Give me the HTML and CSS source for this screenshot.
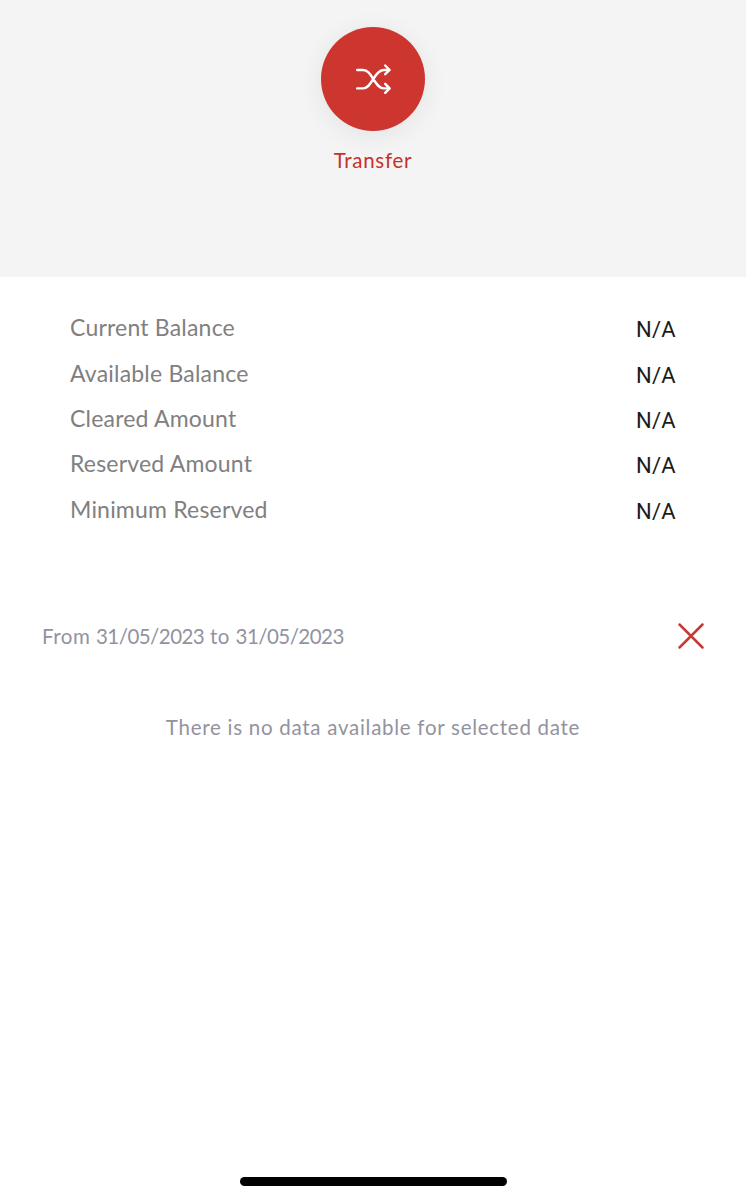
FILE: index.html
```
<!doctype html>
<html lang="en">
  <head>
    <meta charset="utf-8">
    <meta name="viewport" content="width=device-width, initial-scale=1">
    <title>Account</title>
    <link rel="stylesheet" href="styles.css">
  </head>
<body>
<div class="actions">
  <button class="transfer">
    <span class="transfer_circle">
      <svg width="36" height="32" viewBox="0 0 36 32">
        <path d="M2.2 7H8C13 7 15.5 11.5 18.3 16S24 25.4 29 25.4H34M2.2 25.4H8C13 25.4 15.5 20.5 18.3 16S24 7 29 7H34"/>
        <path d="M30.2 2.5L34.6 7L30.2 11.2M30.2 20.8L34.6 25.4L30.2 29.8"/>
      </svg>
    </span>
    <span class="transfer_label">Transfer</span>
  </button>
</div>

<dl class="balances">
  <div class="row"><dt>Current Balance</dt><dd>N/A</dd></div>
  <div class="row"><dt>Available Balance</dt><dd>N/A</dd></div>
  <div class="row"><dt>Cleared Amount</dt><dd>N/A</dd></div>
  <div class="row"><dt>Reserved Amount</dt><dd>N/A</dd></div>
  <div class="row"><dt>Minimum Reserved</dt><dd>N/A</dd></div>
</dl>

<div class="filter">
  <span class="filter_dates">From <time>31/05/2023</time> to <time>31/05/2023</time></span>
  <button class="filter_clear" aria-label="Clear">
    <svg width="28" height="28" viewBox="0 0 28 28">
      <path d="M2.5 2.5L25.5 25.5M25.5 2.5L2.5 25.5"/>
    </svg>
  </button>
</div>

<p class="empty">There is no data available for selected date</p>

<div class="home_bar"></div>
</body>
</html>
```
FILE: styles.css
```
* { box-sizing: border-box; }

body {
  display: flex;
  flex-direction: column;
  height: 1200px;
  margin: 0;
  background-color: #ffffff;
  font-family: Lato, sans-serif;
}

button {
  padding: 0;
  border: 0;
  background: none;
  font: inherit;
}

svg {
  display: block;
  fill: none;
  stroke-linecap: round;
  stroke-linejoin: round;
}

.actions {
  display: flex;
  justify-content: center;
  align-items: flex-start;
  height: 277px;
  padding-top: 27px;
  background-color: #f4f4f4;
}

.transfer {
  display: flex;
  flex-direction: column;
  align-items: center;
  color: #c5322c;
}

.transfer_circle {
  display: flex;
  justify-content: center;
  align-items: center;
  width: 104px;
  height: 104px;
  border-radius: 50%;
  background-color: #cd352f;
  box-shadow: 0 4px 26px rgba(0, 0, 0, 0.07);
}

.transfer_circle svg { stroke: #ffffff; stroke-width: 2.4; }

.transfer_label {
  margin-top: 16px;
  font-size: 20.5px;
  line-height: 26px;
  letter-spacing: 0.7px;
}

.balances {
  margin: 28.4px 70px 0;
}

.row {
  display: flex;
  justify-content: space-between;
  height: 45.3px;
  line-height: 45.3px;
}

.row dt {
  color: #808080;
  font-size: 23px;
  letter-spacing: 0.2px;
}

.row dd {
  margin: 0;
  padding-top: 2px;
  color: #1c1c1c;
  font-family: Roboto, sans-serif;
  font-size: 22px;
  letter-spacing: 0.3px;
}

.filter {
  display: flex;
  justify-content: space-between;
  align-items: center;
  height: 40px;
  margin: 84.6px 41px 0 42px;
}

.filter_dates {
  color: #92939f;
  font-size: 20.5px;
  letter-spacing: 0.5px;
}

.filter_dates time { letter-spacing: -0.55px; }

.filter_clear svg { stroke: #c43b35; stroke-width: 2.5; }

.empty {
  margin: 56px 0 0;
  color: #92939f;
  font-size: 20.5px;
  line-height: 30px;
  letter-spacing: 0.73px;
  text-align: center;
}

.home_bar {
  width: 267px;
  height: 9px;
  margin: auto auto 14px;
  border-radius: 5px;
  background-color: #000000;
}
```
